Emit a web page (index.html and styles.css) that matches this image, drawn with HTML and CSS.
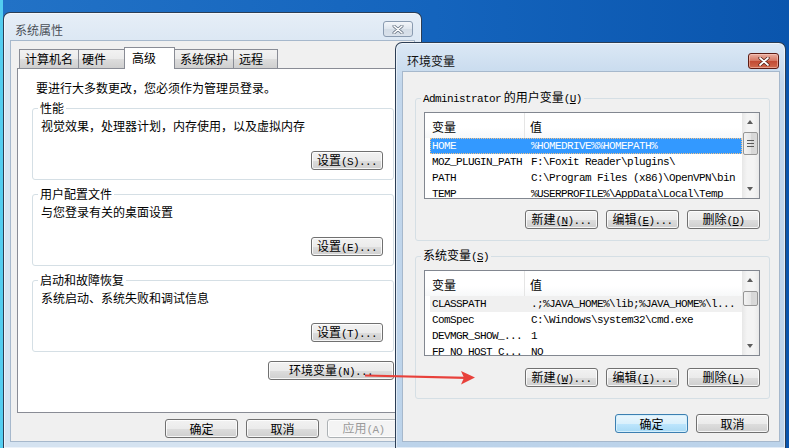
FILE: index.html
```html
<!DOCTYPE html>
<html lang="zh-CN">
<head>
    <meta charset="UTF-8">
    <title>系统属性 - 环境变量</title>
    <link rel="stylesheet" href="styles.css">
</head>
<body>
    <div class="desktop">

        <!-- 系统属性 (inactive window) -->
        <div class="window sysprops">
            <div class="titlebar">
                <span class="title">系统属性</span>
                <span class="close">
                    <svg width="12" height="9" viewBox="0 0 12 9"><path d="M2 1 L10 8 M10 1 L2 8" stroke="#6a7787" stroke-width="3" stroke-linecap="round"/><path d="M2 1 L10 8 M10 1 L2 8" stroke="#fff" stroke-width="1.6" stroke-linecap="round"/></svg>
                </span>
            </div>
            <div class="client">
                <div class="tabs">
                    <div class="tab tab-name">计算机名</div>
                    <div class="tab tab-hw">硬件</div>
                    <div class="tab tab-adv selected">高级</div>
                    <div class="tab tab-prot">系统保护</div>
                    <div class="tab tab-remote">远程</div>
                </div>
                <div class="tab-panel">
                    <p class="intro">要进行大多数更改，您必须作为管理员登录。</p>

                    <fieldset class="group">
                        <legend>性能</legend>
                        <p class="desc">视觉效果，处理器计划，内存使用，以及虚拟内存</p>
                        <div class="group-actions">
                            <button class="btn btn-set">设置<span class="m">(S)...</span></button>
                        </div>
                    </fieldset>

                    <fieldset class="group">
                        <legend>用户配置文件</legend>
                        <p class="desc">与您登录有关的桌面设置</p>
                        <div class="group-actions">
                            <button class="btn btn-set">设置<span class="m">(E)...</span></button>
                        </div>
                    </fieldset>

                    <fieldset class="group">
                        <legend>启动和故障恢复</legend>
                        <p class="desc">系统启动、系统失败和调试信息</p>
                        <div class="group-actions">
                            <button class="btn btn-set">设置<span class="m">(T)...</span></button>
                        </div>
                    </fieldset>

                    <div class="env-row">
                        <button class="btn btn-env">环境变量<span class="m">(N)...</span></button>
                    </div>
                </div>
                <div class="dialog-buttons">
                    <button class="btn">确定</button>
                    <button class="btn">取消</button>
                    <button class="btn disabled">应用<span class="m">(A)</span></button>
                </div>
            </div>
        </div>

        <!-- 环境变量 (active window) -->
        <div class="window envvars">
            <div class="titlebar">
                <span class="title">环境变量</span>
                <span class="close red">
                    <svg width="12" height="9" viewBox="0 0 12 9"><path d="M2 1 L10 8 M10 1 L2 8" stroke="#4a1810" stroke-width="3.2" stroke-linecap="round"/><path d="M2 1 L10 8 M10 1 L2 8" stroke="#fff" stroke-width="1.8" stroke-linecap="round"/></svg>
                </span>
            </div>
            <div class="client">
                <fieldset class="group env-group">
                    <legend><span class="m">Administrator</span> 的用户变量<span class="m">(<u>U</u>)</span></legend>
                    <div class="list">
                        <div class="list-body">
                            <div class="list-head">
                                <div class="col">变量</div>
                                <div class="col col-val">值</div>
                            </div>
                            <div class="row selected"><span class="m">HOME</span><span class="m val">%HOMEDRIVE%%HOMEPATH%</span></div>
                            <div class="row"><span class="m">MOZ_PLUGIN_PATH</span><span class="m val">F:\Foxit Reader\plugins\</span></div>
                            <div class="row"><span class="m">PATH</span><span class="m val">C:\Program Files (x86)\OpenVPN\bin</span></div>
                            <div class="row"><span class="m">TEMP</span><span class="m val">%USERPROFILE%\AppData\Local\Temp</span></div>
                        </div>
                        <div class="scrollbar">
                            <div class="arrow up"></div>
                            <div class="track"><div class="thumb thumb-lg"></div></div>
                            <div class="arrow down"></div>
                        </div>
                    </div>
                    <div class="list-actions">
                        <button class="btn">新建<span class="m">(<u>N</u>)...</span></button>
                        <button class="btn">编辑<span class="m">(<u>E</u>)...</span></button>
                        <button class="btn">删除<span class="m">(<u>D</u>)</span></button>
                    </div>
                </fieldset>

                <fieldset class="group env-group">
                    <legend>系统变量<span class="m">(<u>S</u>)</span></legend>
                    <div class="list list-sys">
                        <div class="list-body">
                            <div class="list-head">
                                <div class="col">变量</div>
                                <div class="col col-val">值</div>
                            </div>
                            <div class="row inactive-sel"><span class="m">CLASSPATH</span><span class="m val">.;%JAVA_HOME%\lib;%JAVA_HOME%\l...</span></div>
                            <div class="row"><span class="m">ComSpec</span><span class="m val">C:\Windows\system32\cmd.exe</span></div>
                            <div class="row"><span class="m">DEVMGR_SHOW_...</span><span class="m val">1</span></div>
                            <div class="row"><span class="m">FP_NO_HOST_C...</span><span class="m val">NO</span></div>
                        </div>
                        <div class="scrollbar">
                            <div class="arrow up"></div>
                            <div class="track"><div class="thumb thumb-sm"></div></div>
                            <div class="arrow down"></div>
                        </div>
                    </div>
                    <div class="list-actions">
                        <button class="btn">新建<span class="m">(<u>W</u>)...</span></button>
                        <button class="btn">编辑<span class="m">(<u>I</u>)...</span></button>
                        <button class="btn">删除<span class="m">(<u>L</u>)</span></button>
                    </div>
                </fieldset>

                <div class="dialog-buttons env-buttons">
                    <button class="btn default">确定</button>
                    <button class="btn">取消</button>
                </div>
            </div>
        </div>

        <!-- 红色箭头标注 -->
        <svg class="annotation" width="789" height="448" viewBox="0 0 789 448">
            <path d="M365 375.5 L466 377.8" stroke="#e8413b" stroke-width="2.2"/>
            <polygon points="475,377.5 461,371 464,377.7 461,384.5" fill="#e8413b"/>
        </svg>
    </div>
</body>
</html>
```

FILE: styles.css
```css
body {
    margin: 0;
    padding: 0;
    font-family: "Noto Sans CJK SC", "Liberation Sans", sans-serif;
    font-size: 12px;
    line-height: 16px;
    color: #000;
}

.desktop {
    position: relative;
    width: 789px;
    height: 448px;
    overflow: hidden;
    background: linear-gradient(to right, #53cdf0 0, #53cdf0 3px, #2272c6 3px, #1464bd 55%, #0a55ad 100%);
}

/* windows */
.window {
    position: absolute;
    box-sizing: border-box;
    border: 1px solid #2c3e55;
    border-bottom: none;
    border-radius: 7px 7px 0 0;
    padding: 0 7px 7px 7px;
    display: flex;
    flex-direction: column;
    box-shadow: inset 0 0 0 1px rgba(255, 255, 255, 0.55);
}

.sysprops {
    left: 3px;
    top: 12px;
    width: 419px;
    height: 436px;
    background: linear-gradient(#e6eef7, #d8e5f2 40px, #d5e3f1);
}

.envvars {
    left: 395px;
    top: 42px;
    width: 391px;
    height: 406px;
    padding-right: 6px;
    background: linear-gradient(#dbe8f5, #c3d7ec 40px, #bcd3ea);
}

.titlebar {
    height: 28px;
    display: flex;
    justify-content: space-between;
    align-items: flex-start;
    padding: 8px 1px 0 4px;
    box-sizing: border-box;
    flex-shrink: 0;
}

.envvars .titlebar {
    height: 29px;
    padding: 10px 0 0 4px;
}

.title {
    margin-top: 1px;
    color: #4a4f57;
}

.envvars .title {
    margin-top: 0;
    color: #111;
}

.close {
    width: 30px;
    height: 16px;
    box-sizing: border-box;
    border: 1px solid #8a9bb0;
    border-radius: 3px;
    background: linear-gradient(#f3f6fa, #dfe6ee 50%, #d3dce6 51%, #dae2eb);
    display: flex;
    align-items: center;
    justify-content: center;
}

.close.red {
    width: 31px;
    border-color: #5c1c14;
    background: linear-gradient(#eab0a2, #d57762 48%, #c24a33 52%, #d06a4e);
    box-shadow: inset 0 0 0 1px rgba(255, 210, 200, 0.5);
}

.client {
    flex: 1;
    background: #f0f0f0;
    box-shadow: 0 0 0 1px #a6b8cc;
}

/* tabs */
.sysprops .client {
    padding: 6px 7px 0 6px;
}

.tabs {
    display: flex;
    align-items: flex-end;
    margin-left: 2px;
    position: relative;
    z-index: 1;
}

.tab {
    box-sizing: border-box;
    height: 19px;
    padding: 1px 0 0 5px;
    border: 1px solid #898c95;
    border-bottom: none;
    background: linear-gradient(#f2f2f2, #ebebeb 50%, #dddddd 51%, #cfcfcf);
    margin-right: -1px;
}

.tab-name { width: 60px; }
.tab-hw { width: 47px; padding-left: 3px; }
.tab-adv { width: 51px; padding-left: 7px; }
.tab-prot { width: 60px; }
.tab-remote { width: 45px; }

.tab.selected {
    height: 22px;
    margin-bottom: -1px;
    padding-top: 2px;
    background: #fff;
    border-color: #898c95;
}

.tab-panel {
    box-sizing: border-box;
    height: 345px;
    border: 1px solid #898c95;
    background: #fff;
    padding: 11px 12px 0 14px;
}

.intro {
    margin: 0 0 4px 4px;
}

/* group boxes */
.group {
    margin: 0 0 6px 0;
    padding: 2px 10px 9px 8px;
    border: 1px solid #d5dfe5;
    border-radius: 3px;
    min-inline-size: 0;
}

.group legend {
    padding: 0 2px;
    margin-left: -3px;
    line-height: 16px;
}

.desc {
    margin: 0;
}

.group-actions {
    display: flex;
    justify-content: flex-end;
    margin-top: 17px;
}

.env-row {
    display: flex;
    justify-content: flex-end;
    margin-top: 9px;
    margin-right: 0;
}

/* buttons */
.btn {
    box-sizing: border-box;
    width: 73px;
    height: 19px;
    padding: 0;
    border: 1px solid #707070;
    border-radius: 3px;
    background: linear-gradient(#f2f2f2, #ebebeb 50%, #dddddd 51%, #cfcfcf);
    box-shadow: inset 0 0 0 1px rgba(255, 255, 255, 0.8);
    font-family: "Noto Sans CJK SC", "Liberation Sans", sans-serif;
    font-size: 12px;
    line-height: 16px;
    color: #000;
    text-align: center;
}

.btn-set { width: 72px; }
.btn-env { width: 126px; }

.btn.disabled {
    color: #9a9a9a;
    border-color: #adb2b5;
    background: #f4f4f4;
}

.btn.default {
    border-color: #3c7fb1;
    background: linear-gradient(#eaf6fd, #d9f0fc 50%, #bee6fd 51%, #a7d9f5);
    box-shadow: inset 0 0 0 1px #d4effc;
}

.dialog-buttons {
    display: flex;
    justify-content: flex-end;
    gap: 8px;
    margin-top: 6px;
    padding-right: 7px;
}

/* latin text in the old bitmap font width */
.m {
    font-family: "Liberation Mono", monospace;
    font-size: 11px;
    letter-spacing: -0.6px;
}

u {
    text-decoration: underline;
    text-underline-offset: 1px;
}

/* environment variables dialog */
.envvars .client {
    padding: 17px 0 0 0;
}

.env-group {
    margin: 0 9px 6px 12px;
    padding: 5px 9px 11px 8px;
}

.list {
    height: 87px;
    box-sizing: border-box;
    border: 1px solid #828790;
    background: #fff;
    display: flex;
    overflow: hidden;
}

.list-sys {
    height: 86px;
}

.list-body {
    flex: 1;
    overflow: hidden;
}

.list-head {
    display: grid;
    grid-template-columns: 99px 1fr;
    height: 25px;
    box-sizing: border-box;
    background: linear-gradient(#fff, #fff 60%, #f7f8f9);
}

.list-head .col {
    padding: 6px 0 0 7px;
}

.list-head .col-val {
    padding-left: 5px;
    border-left: 1px solid #e5e5e5;
}

.row {
    display: grid;
    grid-template-columns: 94px 1fr;
    height: 16px;
    margin-left: 5px;
    white-space: nowrap;
    overflow: hidden;
}

.row span {
    padding-left: 2px;
}

.row .val {
    padding-left: 7px;
}

.row.selected {
    background: #3399ff;
    color: #fff;
    outline: 1px dotted #f3c38a;
    outline-offset: -1px;
}

.row.inactive-sel {
    background: #f0f0f0;
}

.scrollbar {
    width: 17px;
    display: flex;
    flex-direction: column;
    background: linear-gradient(to right, #e7e7e7, #f4f4f4 30%, #f4f4f4 70%, #e9e9e9);
}

.arrow {
    height: 17px;
    position: relative;
}

.arrow::after {
    content: "";
    position: absolute;
    left: 5px;
    border-left: 3.5px solid transparent;
    border-right: 3.5px solid transparent;
}

.arrow.up::after {
    top: 7px;
    border-bottom: 4px solid #5d5d5d;
}

.arrow.down::after {
    top: 6px;
    border-top: 4px solid #5d5d5d;
}

.track {
    flex: 1;
}

.thumb {
    margin: 2px 1px 0 1px;
    box-sizing: border-box;
    border: 1px solid #969696;
    border-radius: 2px;
    background: linear-gradient(to right, #f3f3f3, #e6e6e6 50%, #d6d6d6 51%, #dadada);
    display: flex;
    align-items: center;
    justify-content: center;
}

.thumb-lg {
    height: 23px;
}

.thumb-lg::after {
    content: "";
    width: 7px;
    height: 7px;
    background: repeating-linear-gradient(#5a5a5a 0 1px, transparent 1px 3px);
}

.thumb-sm {
    height: 15px;
    margin-top: 3px;
}

.list-actions {
    display: flex;
    justify-content: flex-end;
    gap: 8px;
    margin-top: 11px;
}

.env-group + .env-group .list-actions {
    margin-top: 12px;
}

.env-buttons {
    margin-top: 15px;
    padding-right: 10px;
}

.annotation {
    position: absolute;
    left: 0;
    top: 0;
    pointer-events: none;
}
```
